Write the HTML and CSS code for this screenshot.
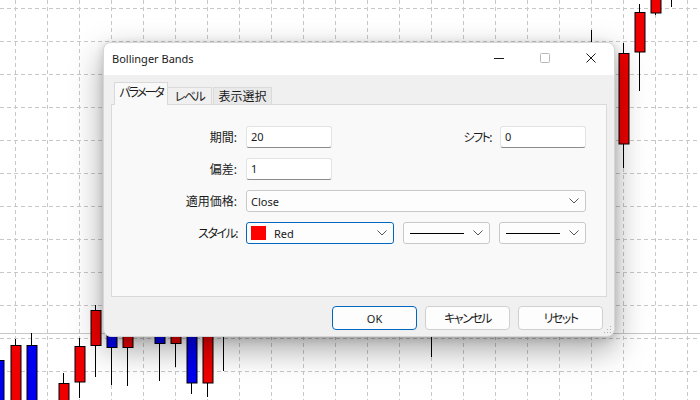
FILE: index.html
```html
<!DOCTYPE html>
<html lang="ja">
<head>
<meta charset="utf-8">
<title>Bollinger Bands</title>
<link rel="stylesheet" href="styles.css">
</head>
<body>
<div class="screen">
  <svg class="chart" width="700" height="400" viewBox="0 0 700 400" xmlns="http://www.w3.org/2000/svg">
    <g class="grid">
      <path d="M15.5 0V400M47.5 0V400M79.5 0V400M111.5 0V400M143.5 0V400M175.5 0V400M207.5 0V400M239.5 0V400M271.5 0V400M303.5 0V400M335.5 0V400M367.5 0V400M399.5 0V400M431.5 0V400M463.5 0V400M495.5 0V400M527.5 0V400M559.5 0V400M591.5 0V400M623.5 0V400M655.5 0V400M687.5 0V400"/>
      <path d="M0 8.5H700M0 41.5H700M0 74.5H700M0 107.5H700M0 140.5H700M0 173.5H700M0 206.5H700M0 239.5H700M0 272.5H700M0 305.5H700M0 338.5H700M0 371.5H700"/>
    </g>
    <path class="priceline" d="M0 333.5H700"/>
    <g class="wicks">
      <path d="M15.5 339V400M31.5 333V400M63.5 373V400M79.5 338V398M95.5 305V377M111.5 330V385M127.5 330V386M159.5 330V381M175.5 330V367M191.5 330V394M207.5 330V397M223.5 330V371M431.5 330V357M591.5 30V50M623.5 43V168M639.5 4V91M655.5 0V15M671.5 0V7"/>
    </g>
    <g class="blue">
      <rect x="-5" y="360.5" width="9" height="45"/>
      <rect x="27" y="345.5" width="10" height="60"/>
      <rect x="107" y="330.5" width="10" height="17"/>
      <rect x="155" y="330.5" width="10" height="13"/>
      <rect x="187" y="330.5" width="10" height="52.5"/>
    </g>
    <g class="red">
      <rect x="11" y="345.5" width="10" height="60"/>
      <rect x="59" y="383.5" width="10" height="22"/>
      <rect x="75" y="346.5" width="10" height="35.5"/>
      <rect x="91" y="310.5" width="10" height="35"/>
      <rect x="123" y="330.5" width="10" height="17"/>
      <rect x="171" y="330.5" width="10" height="13"/>
      <rect x="203" y="330.5" width="10" height="52.5"/>
      <rect x="619" y="53.5" width="10" height="90.5"/>
      <rect x="635" y="12.5" width="10" height="39.5"/>
      <rect x="651" y="-2.5" width="10" height="15.5"/>
    </g>
  </svg>

  <div class="dialog">
    <div class="titlebar">
      <span class="title">Bollinger Bands</span>
      <div class="winbtns">
        <div class="winbtn"><svg width="10" height="10" viewBox="0 0 10 10"><path d="M0 5.5H10" stroke="#1a1a1a" stroke-width="1"/></svg></div>
        <div class="winbtn"><svg width="10" height="10" viewBox="0 0 10 10"><rect x="0.5" y="0.5" width="9" height="9" rx="1" fill="none" stroke="#b8b8b8" stroke-width="1"/></svg></div>
        <div class="winbtn"><svg width="10" height="10" viewBox="0 0 10 10"><path d="M0.5 0.5L9.5 9.5M9.5 0.5L0.5 9.5" stroke="#1a1a1a" stroke-width="1"/></svg></div>
      </div>
    </div>
    <div class="content">
      <div class="tabs">
        <div class="tab active"><span class="kana tight">パラメータ</span></div>
        <div class="tab second"><span class="kana">レベル</span></div>
        <div class="tab dim">表示選択</div>
      </div>
      <div class="panel">
        <div class="row">
          <span class="lbl">期間:</span>
          <div class="fields split">
            <div class="edit">20</div>
            <div class="pair">
              <span class="lbl2 kana">シフト:</span>
              <div class="edit">0</div>
            </div>
          </div>
        </div>
        <div class="row">
          <span class="lbl">偏差:</span>
          <div class="fields">
            <div class="edit">1</div>
          </div>
        </div>
        <div class="row">
          <span class="lbl">適用価格:</span>
          <div class="fields">
            <div class="combo wide"><span class="val">Close</span><svg class="chev" width="10" height="6" viewBox="0 0 10 6"><path d="M0.5 0.5L5 5L9.5 0.5" fill="none" stroke="#555" stroke-width="1"/></svg></div>
          </div>
        </div>
        <div class="row">
          <span class="lbl kana">スタイル:</span>
          <div class="fields gap">
            <div class="combo color focus"><span class="swatch"></span><span class="val">Red</span><svg class="chev" width="10" height="6" viewBox="0 0 10 6"><path d="M0.5 0.5L5 5L9.5 0.5" fill="none" stroke="#555" stroke-width="1"/></svg></div>
            <div class="combo line"><span class="stroke"></span><svg class="chev" width="10" height="6" viewBox="0 0 10 6"><path d="M0.5 0.5L5 5L9.5 0.5" fill="none" stroke="#555" stroke-width="1"/></svg></div>
            <div class="combo line"><span class="stroke"></span><svg class="chev" width="10" height="6" viewBox="0 0 10 6"><path d="M0.5 0.5L5 5L9.5 0.5" fill="none" stroke="#555" stroke-width="1"/></svg></div>
          </div>
        </div>
      </div>
      <div class="buttons">
        <div class="btn primary"><span class="latin">OK</span></div>
        <div class="btn"><span class="kana">キャンセル</span></div>
        <div class="btn"><span class="kana">リセット</span></div>
      </div>
    </div>
    <svg class="grip" width="8" height="8" viewBox="0 0 8 8"><g fill="#b0b0b0"><rect x="6" y="0" width="1" height="1"/><rect x="3" y="3" width="1" height="1"/><rect x="6" y="3" width="1" height="1"/><rect x="0" y="6" width="1" height="1"/><rect x="3" y="6" width="1" height="1"/><rect x="6" y="6" width="1" height="1"/></g></svg>
  </div>
</div>
</body>
</html>
```
FILE: styles.css
```css
* { box-sizing: border-box; }
html, body { margin: 0; padding: 0; background: #ffffff; }
body {
  font-family: "Noto Sans", "Noto Sans CJK JP", sans-serif;
  font-size: 12px;
  color: #1a1a1a;
}
.kana { font-feature-settings: "palt"; letter-spacing: -1.5px; }
.kana.tight { letter-spacing: -2.2px; }
.latin, .edit, .val { font-size: 11px; }
.screen {
  position: relative;
  width: 700px;
  height: 400px;
  overflow: hidden;
  background: #ffffff;
}
.chart { position: absolute; left: 0; top: 0; display: block; }
.grid path { stroke: #c8c8c8; stroke-width: 1; stroke-dasharray: 4 3; fill: none; }
.priceline { stroke: #c8c8c8; stroke-width: 1; fill: none; }
.wicks path { stroke: #000; stroke-width: 1; fill: none; }
.blue rect { fill: #0000f0; stroke: #000; stroke-width: 1; }
.red rect { fill: #f00000; stroke: #000; stroke-width: 1; }

.dialog {
  position: absolute;
  left: 103px;
  top: 42px;
  width: 512px;
  height: 295px;
  background: #f0f0f0;
  border-radius: 8px;
  border: 1px solid #d6d6d6;
  box-shadow: 0 12px 32px rgba(0, 0, 0, 0.36), 0 2px 8px rgba(0, 0, 0, 0.14);
  display: flex;
  flex-direction: column;
  overflow: hidden;
}
.titlebar {
  height: 32px;
  background: #ffffff;
  display: flex;
  align-items: center;
  flex: none;
}
.title {
  padding-left: 8px;
  font-size: 11px;
  color: #1a1a1a;
  flex: 1;
  position: relative;
  top: -1px;
}
.winbtns { display: flex; height: 100%; }
.winbtn {
  width: 46px;
  height: 100%;
  display: flex;
  align-items: center;
  justify-content: center;
}
.winbtn svg { display: block; position: relative; top: -1px; }

.content {
  flex: 1;
  display: flex;
  flex-direction: column;
  padding: 7px 7px 6px 7px;
}
.tabs {
  display: flex;
  height: 22px;
  align-items: flex-end;
  padding-left: 3px;
}
.tab {
  height: 17px;
  line-height: 16px;
  font-size: 12px;
  color: #1a1a1a;
  border: 1px solid #dadada;
  border-bottom: none;
  background: #f0f0f0;
  text-align: center;
  flex: none;
}
.tab.active {
  width: 54px;
  height: 23px;
  margin-bottom: -1px;
  background: #f9f9f9;
  line-height: 20px;
  position: relative;
  z-index: 1;
  border-color: #d9d9d9;
}
.tab.second { width: 44px; border-left: none; padding-top: 1px; }
.tab.dim {
  width: 59px;
  margin-left: 1px;
  background: #e9e9e9;
  padding-top: 1px;
}
.panel {
  height: 193px;
  background: #f9f9f9;
  border: 1px solid #d9d9d9;
  padding: 21px 20px 0 0;
  display: flex;
  flex-direction: column;
  gap: 10px;
}
.row { display: flex; align-items: center; height: 22px; }
.lbl {
  width: 125px;
  text-align: right;
  margin-right: 9px;
  flex: none;
}
.fields { width: 340px; flex: none; display: flex; align-items: center; }
.fields.split { justify-content: space-between; }
.fields.gap { gap: 9px; }
.pair { display: flex; align-items: center; gap: 9px; }
.edit {
  width: 86px;
  height: 22px;
  flex: none;
  background: #ffffff;
  border: 1px solid #e3e3e3;
  border-bottom-color: #8c8c8c;
  border-radius: 3px;
  padding-left: 4px;
  line-height: 20px;
}
.combo {
  height: 22px;
  flex: none;
  background: #fdfdfd;
  border: 1px solid #c8c8c8;
  border-radius: 3px;
  display: flex;
  align-items: center;
  padding: 0 6px 0 4px;
}
.combo .val { flex: 1; }
.combo .chev { display: block; flex: none; }
.combo.wide { width: 340px; }
.combo.color { width: 148px; }
.combo.focus { border-color: #0067c0; }
.swatch {
  width: 15px;
  height: 14px;
  background: #ff0000;
  margin-right: 8px;
  flex: none;
}
.combo.line { width: 87px; padding-left: 6px; }
.stroke {
  display: block;
  width: 57px;
  height: 1px;
  background: #000;
  margin-right: 9px;
}
.buttons {
  display: flex;
  justify-content: flex-end;
  gap: 8px;
  margin-top: 9px;
  padding-right: 4px;
}
.btn {
  width: 85px;
  height: 24px;
  border: 1px solid #d0d0d0;
  border-radius: 4px;
  background: #fdfdfd;
  display: flex;
  align-items: center;
  justify-content: center;
  font-size: 12px;
}
.btn.primary { border-color: #0067c0; background: #fdfdfd; }
.grip { position: absolute; right: 2px; bottom: 2px; display: block; }
```
